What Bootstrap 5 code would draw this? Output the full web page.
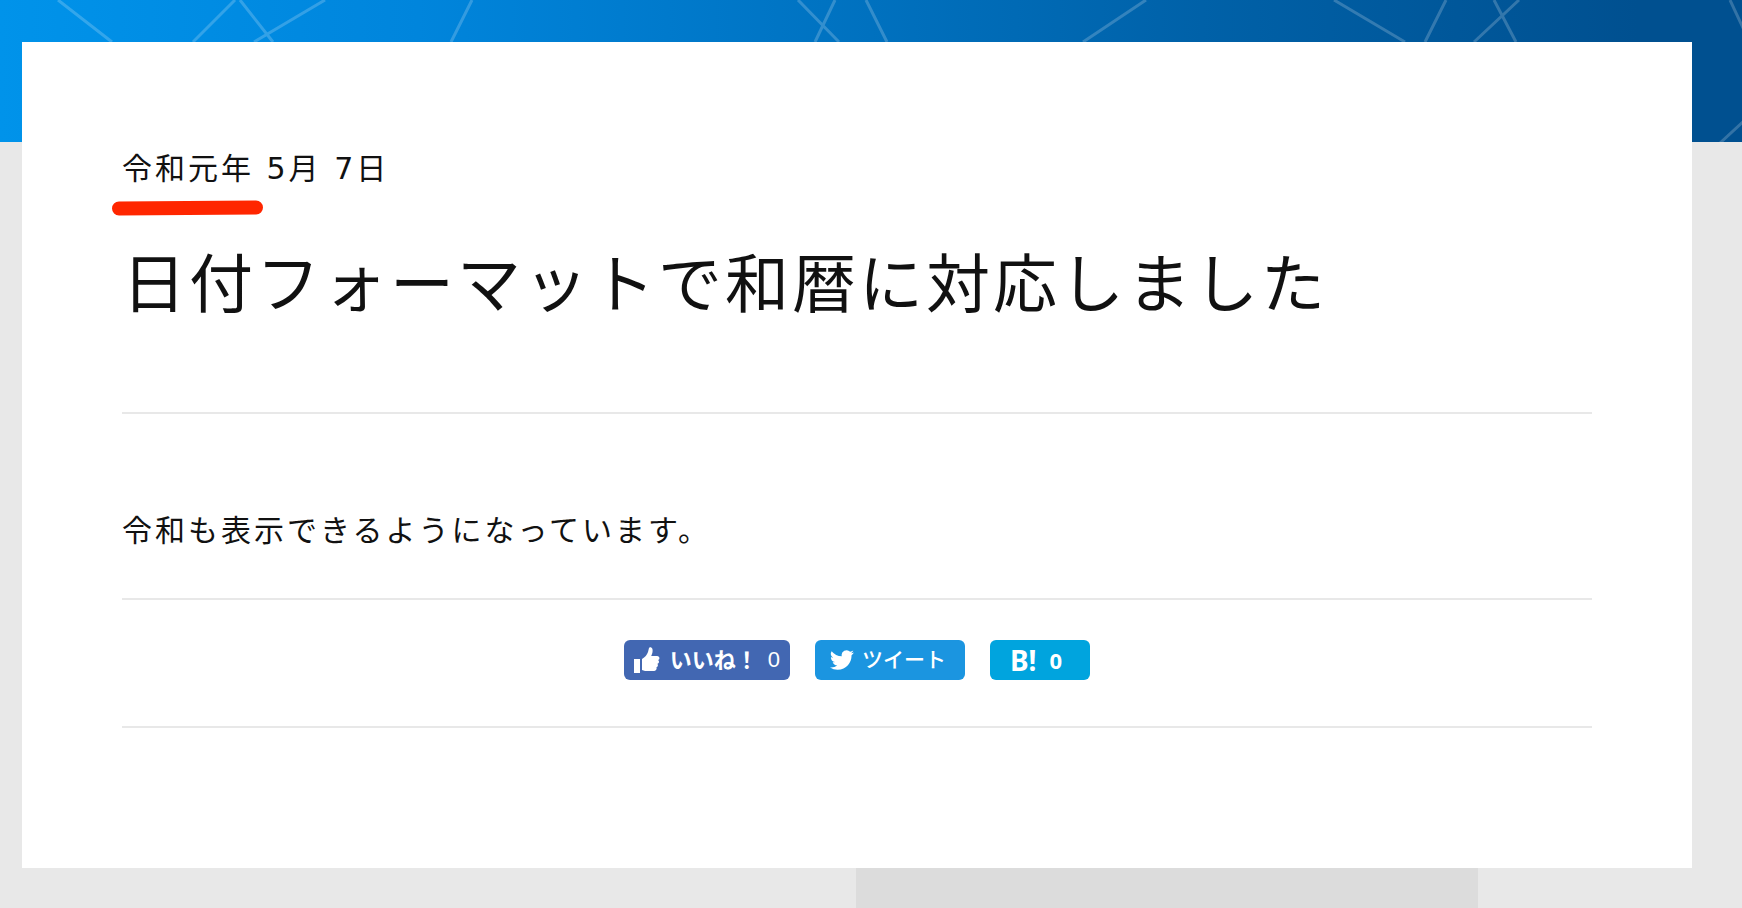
<!DOCTYPE html>
<html lang="ja">
<head>
<meta charset="utf-8">
<meta name="viewport" content="width=device-width, initial-scale=1">
<title>日付フォーマットで和暦に対応しました</title>
<link href="https://cdn.jsdelivr.net/npm/bootstrap@5.3.0/dist/css/bootstrap.min.css" rel="stylesheet">
<style>
  body {
    background: #e8e8e8;
    color: #111;
    font-family: "DejaVu Sans", "Noto Sans CJK JP", sans-serif;
    font-size: 30px;
    line-height: 54px;
    letter-spacing: 3px;
  }
  .hero-band {
    height: 142px;
    background: linear-gradient(90deg, #0093ea 0%, #0085dc 24%, #0071bf 50%, #0061a8 69%, #005090 94%, #005090 100%);
  }
  .article-sheet {
    margin: -100px 50px 0 22px;
    padding: 100px 100px 140px;
  }
  .article-head { padding-bottom: 87px; border-bottom: 2px solid #e8e8e8; }
  .article-title { margin: 49px 0 0; font-size: 64px; font-weight: 400; line-height: 80px; }
  .article-text { padding: 90px 0 40px; }
  .date-mark { left: -10px; top: 58px; width: 152px; height: 16px; }
  .share-row {
    gap: 25px;
    padding: 40px 0 46px;
    border-top: 2px solid #e8e8e8;
    border-bottom: 2px solid #e8e8e8;
  }
  .share-btn {
    height: 40px;
    padding: 0 10px;
    border: 0;
    border-radius: 6px;
    color: #fff;
    font-family: "Noto Sans CJK JP", sans-serif;
    font-size: 22px;
    line-height: 36px;
    letter-spacing: 0;
    white-space: nowrap;
  }
  .share-label { padding-bottom: 4px; }
  .share-like { width: 166px; background: #4267b2; font-weight: 700; }
  .share-like .count { font-family: "Liberation Sans", sans-serif; font-weight: 400; }
  .share-tweet { width: 150px; gap: 8px; padding: 0 15px; background: #1b95e0; font-size: 21px; font-weight: 500; }
  .share-hatena { width: 100px; gap: 13px; padding: 0 20px; background: #00a4de; font-family: "Noto Sans", sans-serif; font-weight: 700; }
  .share-hatena .logo { font-size: 28px; }
  .next-block { width: 35.7%; height: 40px; margin-left: 49.15%; background: #dcdcdc; }
</style>
</head>
<body>
<header class="hero-band overflow-hidden">
  <svg class="d-block w-100 h-100" viewBox="0 0 1742 142" preserveAspectRatio="xMidYMin slice" fill="none" stroke="#fff" stroke-opacity=".2" stroke-width="3" aria-hidden="true">
    <path d="M58 0 112 42M235 0 193 42M240 0 273 42M325 0 254 42M472 0 451 42M798 0 839 42M835 0 815 42M866 0 887 42M1146 0 1083 42M1334 0 1405 42M1446 0 1425 42M1494 0 1516 42M1519 0 1474 42M1730 0 1744 30M1720 143 1744 121"/>
  </svg>
</header>
<main class="article-sheet bg-white position-relative">
  <article>
    <header class="article-head">
      <div class="position-relative">
        <time datetime="2019-05-07">令和元年 5月 7日</time>
        <svg class="date-mark position-absolute" viewBox="0 0 152 16" aria-hidden="true"><path d="M7 8.500 144 7.500" stroke="#ff2600" stroke-width="14" stroke-linecap="round"/></svg>
      </div>
      <h1 class="article-title">日付フォーマットで和暦に対応しました</h1>
    </header>
    <p class="article-text mb-0">令和も表示できるようになっています。</p>
  </article>
  <div class="share-row d-flex justify-content-center flex-wrap">
    <button type="button" class="share-btn share-like d-flex align-items-center justify-content-between">
      <svg width="26" height="26" viewBox="0 0 26 26" fill="#fff" aria-hidden="true"><path d="M0 12h6v14H0zM8 12c3-2 5-4 6-7l1-4c.3-1.300 3-1 3.400 1 .6 2.400-.2 5-1.200 7H23c3 0 3 3.600 1 4 1.600 1 1.200 3.400-.6 3.800 1 1.400.4 3-1 3.400.7 1.600-.2 3.800-2.400 3.800H11l-3-1z"/></svg>
      <span class="share-label">いいね！</span><span class="count">0</span>
    </button>
    <button type="button" class="share-btn share-tweet d-flex align-items-center">
      <svg width="24" height="24" viewBox="0 0 24 24" fill="#fff" aria-hidden="true"><path d="M23.950 4.570a10 10 0 0 1-2.820.77 4.960 4.960 0 0 0 2.160-2.720 10 10 0 0 1-3.120 1.180 4.920 4.920 0 0 0-8.380 4.480A13.900 13.900 0 0 1 1.640 3.160a4.920 4.920 0 0 0 1.520 6.570 4.900 4.900 0 0 1-2.230-.61v.06a4.920 4.920 0 0 0 3.950 4.830 5 5 0 0 1-2.210.08 4.940 4.940 0 0 0 4.600 3.420A9.870 9.870 0 0 1 0 19.540a14 14 0 0 0 7.550 2.210c9.050 0 14-7.500 14-13.980 0-.21 0-.42-.02-.63a9.940 9.940 0 0 0 2.420-2.570z"/></svg>
      <span class="share-label">ツイート</span>
    </button>
    <button type="button" class="share-btn share-hatena d-flex align-items-center">
      <span class="logo">B!</span><span>0</span>
    </button>
  </div>
</main>
<div class="next-block"></div>
<script src="https://cdn.jsdelivr.net/npm/bootstrap@5.3.0/dist/js/bootstrap.bundle.min.js"></script>
</body>
</html>
